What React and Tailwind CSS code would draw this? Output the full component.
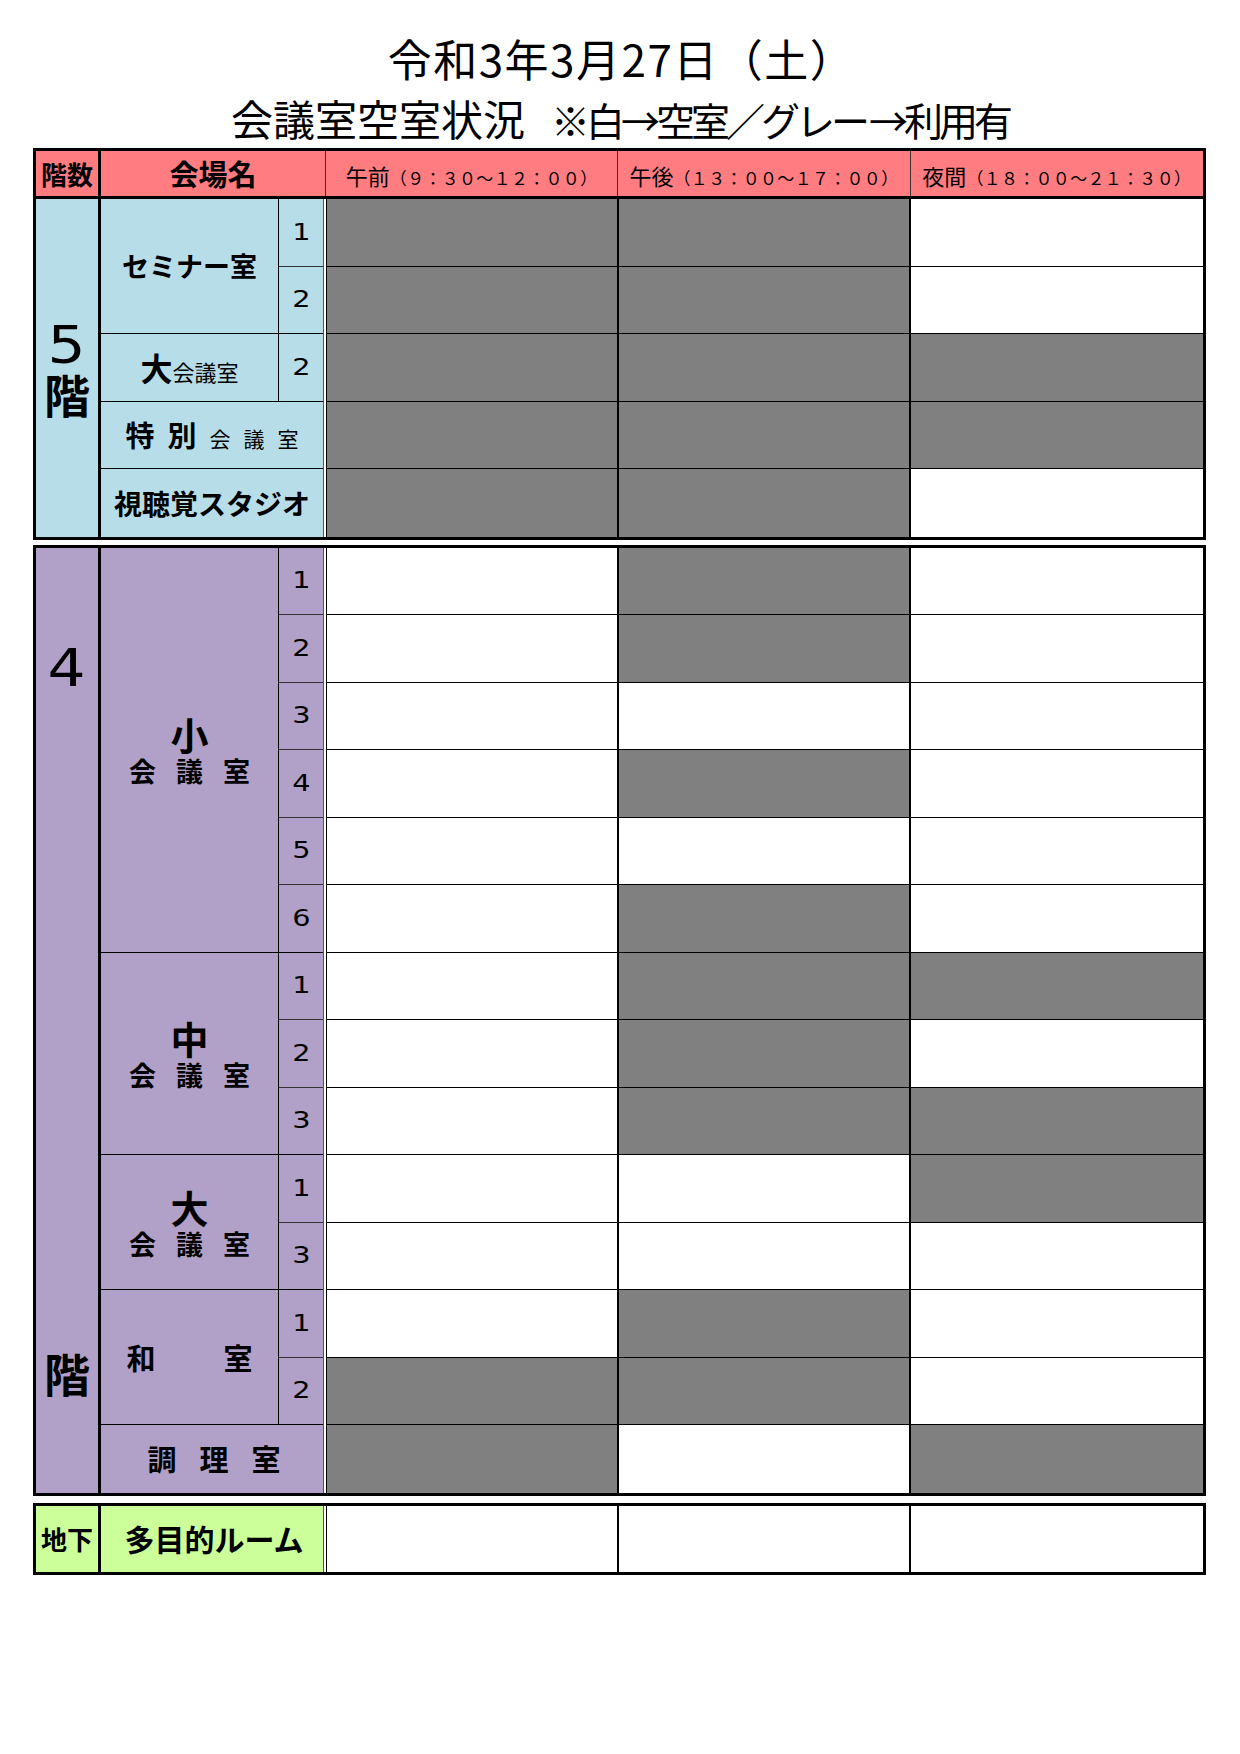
import React from "react";

const GRAY = "bg-[#808080]";

function TimeRow({ g, last, h = "h-[67.5px]" }) {
  return (
    <div className={`grid grid-cols-3 ${h} ${last ? "" : "border-b border-black"}`}>
      {g.map((v, i) => (
        <div
          key={i}
          className={`${v ? GRAY : "bg-white"} ${i < 2 ? "border-r-2 border-black" : ""}`}
        />
      ))}
    </div>
  );
}

function Num({ n }) {
  return (
    <span className="inline-block font-['DejaVu_Sans',sans-serif] text-[23px] leading-none scale-x-125">
      {n}
    </span>
  );
}

function Group({ hClass, nums, children, last }) {
  return (
    <div className={`${hClass} flex ${last ? "" : "border-b border-black"}`}>
      <div className="w-[178px] border-r border-black flex items-center justify-center">
        {children}
      </div>
      <div className="w-[44px] flex flex-col">
        {nums.map((n, i) => (
          <div
            key={i}
            className={`flex-1 flex items-center justify-center ${
              i < nums.length - 1 ? "border-b border-[#333]" : ""
            }`}
          >
            <Num n={n} />
          </div>
        ))}
      </div>
    </div>
  );
}

function BigLabel({ c }) {
  return (
    <div className="flex flex-col items-center font-bold">
      <span className="text-[38px] leading-[38px]">{c}</span>
      <div className="mt-[4px] flex gap-[20px] text-[27px] leading-[27px]">
        <span>会</span>
        <span>議</span>
        <span>室</span>
      </div>
    </div>
  );
}

const rows5 = [
  [1, 1, 0],
  [1, 1, 0],
  [1, 1, 1],
  [1, 1, 1],
  [1, 1, 0],
];

const rows4 = [
  [0, 1, 0],
  [0, 1, 0],
  [0, 0, 0],
  [0, 1, 0],
  [0, 0, 0],
  [0, 1, 0],
  [0, 1, 1],
  [0, 1, 0],
  [0, 1, 1],
  [0, 0, 1],
  [0, 0, 0],
  [0, 1, 0],
  [1, 1, 0],
  [1, 0, 1],
];

function TimeHead({ a, b, last }) {
  return (
    <div className={`${last ? "" : "border-r border-[#333]"} flex items-center justify-center`}>
      <div className="flex items-baseline pt-[2px]">
        <span className="text-[22px] leading-none">{a}</span>
        <span className="text-[17px] leading-none tracking-[0.3px]">{b}</span>
      </div>
    </div>
  );
}

export default function App() {
  return (
    <div className="w-[1240px] min-h-[1754px] bg-white text-black font-['Noto_Sans_CJK_JP','Noto_Sans_CJK_SC',sans-serif]">
      {/* Title */}
      <div className="pt-[36px] flex flex-col items-center">
        <div className="text-[44px] leading-[44px] tracking-[1.5px] pl-[3px] whitespace-nowrap">
          令和3年3月27日（土）
        </div>
        <div className="mt-[17px] h-[42px] flex items-baseline whitespace-nowrap">
          <span className="text-[42px] leading-[42px]">会議室空室状況</span>
          <span className="ml-[26px] text-[39px] leading-[42px] tracking-[-4px]">
            ※白→空室／グレ<span className="mr-[3px]">ー</span>→利用有
          </span>
        </div>
      </div>

      <div className="mt-[9px] mx-[33px] w-[1173px]">
        {/* 5F + header */}
        <div className="border-[3px] border-black">
          <div className="flex h-[48px] bg-[#ff7c80] border-b-[3px] border-black">
            <div className="w-[65px] border-r-[3px] border-black flex items-center justify-center text-[26px] font-bold">
              階数
            </div>
            <div className="w-[225px] border-r border-[#333] flex items-center justify-center text-[29px] font-bold">
              会場名
            </div>
            <div className="flex-1 grid grid-cols-3">
              <TimeHead a="午前" b="（９：３０～１２：００）" />
              <TimeHead a="午後" b="（１３：００～１７：００）" />
              <TimeHead a="夜間" b="（１８：００～２１：３０）" last />
            </div>
          </div>

          <div className="flex">
            <div className="flex w-[290px] bg-[#b7dde8]">
              <div className="w-[65px] border-r-[3px] border-black flex flex-col items-center justify-center">
                <span className="inline-block font-['DejaVu_Sans',sans-serif] text-[52px] leading-[50px] scale-x-115">
                  5
                </span>
                <span className="font-bold text-[46px] leading-[46px]">階</span>
              </div>
              <div className="w-[223px] flex flex-col border-r border-[#555]">
                <Group hClass="h-[135px]" nums={[1, 2]}>
                  <span className="font-bold text-[27px]">セミナー室</span>
                </Group>
                <Group hClass="h-[67.5px]" nums={[2]}>
                  <div className="flex items-baseline">
                    <span className="font-bold text-[32px] leading-none">大</span>
                    <span className="text-[22px] leading-none">会議室</span>
                  </div>
                </Group>
                <div className="h-[67.5px] border-b border-black flex items-center justify-center">
                  <div className="flex items-baseline gap-[13px]">
                    <span className="font-bold text-[29px] leading-none">特</span>
                    <span className="font-bold text-[29px] leading-none">別</span>
                    <span className="text-[21px] leading-none">会</span>
                    <span className="text-[21px] leading-none">議</span>
                    <span className="text-[21px] leading-none">室</span>
                  </div>
                </div>
                <div className="h-[67.5px] flex items-center justify-center">
                  <span className="font-bold text-[28px] leading-none">視聴覚スタジオ</span>
                </div>
              </div>
              <div className="w-[2px] bg-white" />
            </div>
            <div className="flex-1 border-l border-black">
              {rows5.map((g, i) => (
                <TimeRow key={i} g={g} last={i === rows5.length - 1} />
              ))}
            </div>
          </div>
        </div>

        {/* 4F */}
        <div className="mt-[5px] border-[3px] border-black flex">
          <div className="flex w-[290px] bg-[#b1a0c7]">
            <div className="w-[65px] border-r-[3px] border-black flex flex-col items-center justify-between pt-[94px] pb-[97px]">
              <span className="inline-block font-['DejaVu_Sans',sans-serif] text-[52px] leading-[52px] scale-x-115">
                4
              </span>
              <span className="font-bold text-[46px] leading-[48px]">階</span>
            </div>
            <div className="w-[223px] flex flex-col border-r border-[#555]">
              <Group hClass="h-[405px]" nums={[1, 2, 3, 4, 5, 6]}>
                <BigLabel c="小" />
              </Group>
              <Group hClass="h-[202.5px]" nums={[1, 2, 3]}>
                <BigLabel c="中" />
              </Group>
              <Group hClass="h-[135px]" nums={[1, 3]}>
                <BigLabel c="大" />
              </Group>
              <Group hClass="h-[135px]" nums={[1, 2]}>
                <div className="flex font-bold text-[29px] leading-none gap-[68px]">
                  <span>和</span>
                  <span>室</span>
                </div>
              </Group>
              <div className="h-[67.5px] flex items-center justify-center">
                <div className="flex font-bold text-[29px] leading-none gap-[23px] pl-[4px]">
                  <span>調</span>
                  <span>理</span>
                  <span>室</span>
                </div>
              </div>
            </div>
            <div className="w-[2px] bg-white" />
          </div>
          <div className="flex-1 border-l border-black">
            {rows4.map((g, i) => (
              <TimeRow key={i} g={g} last={i === rows4.length - 1} />
            ))}
          </div>
        </div>

        {/* B1 */}
        <div className="mt-[7px] border-[3px] border-black flex">
          <div className="flex w-[290px] h-[66px] bg-[#ccff99]">
            <div className="w-[65px] border-r-[3px] border-black flex items-center justify-center font-bold text-[26px]">
              地下
            </div>
            <div className="w-[223px] border-r border-[#555] flex items-center justify-center font-bold text-[30px] pl-[4px]">
              多目的ルーム
            </div>
            <div className="w-[2px] bg-white" />
          </div>
          <div className="flex-1 border-l border-black">
            <TimeRow g={[0, 0, 0]} last h="h-[66px]" />
          </div>
        </div>
      </div>
    </div>
  );
}
